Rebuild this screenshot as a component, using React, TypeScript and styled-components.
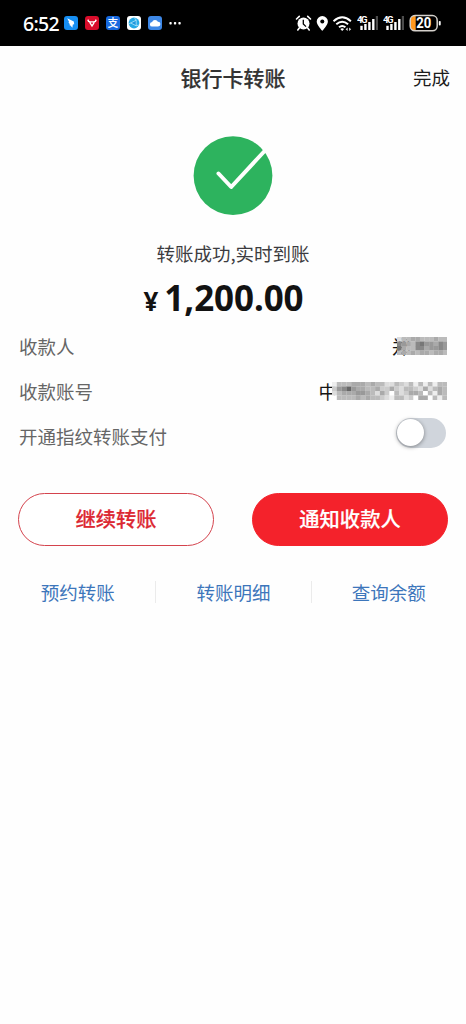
import React from 'react';
import styled, { createGlobalStyle } from 'styled-components';

const GlobalStyle = createGlobalStyle`
  * { box-sizing: border-box; }
  body {
    margin: 0;
    background: #fefefe;
    font-family: "Noto Sans CJK SC", sans-serif;
  }
  button { font-family: inherit; border: 0; background: none; padding: 0; margin: 0; }
`;

const Screen = styled.div`
  width: 466px;
  height: 1024px;
  background: #fefefe;
  overflow: hidden;
`;

const StatusBar = styled.div`
  height: 46px;
  background: #000;
  display: flex;
  justify-content: space-between;
  padding: 0 25px 0 23px;
  color: #fff;
`;

const StatusLeft = styled.div`
  display: flex;
  align-items: center;
  height: 46px;
`;

const Clock = styled.span`
  font: 500 19.5px/24px "Noto Sans", sans-serif;
  width: 41px;
  padding-top: 2px;
  letter-spacing: -0.7px;
  white-space: nowrap;
`;

const AppIcons = styled.div`
  display: flex;
  gap: 7px;
  svg { overflow: visible; }
`;

const StatusRight = styled.div`
  display: flex;
  align-items: center;
  height: 46px;
`;

const Header = styled.header`
  display: grid;
  grid-template-columns: 1fr auto 1fr;
  align-items: center;
  height: 64px;
  padding: 0 16px 2px;
`;

const Title = styled.h1`
  grid-column: 2;
  margin: 0;
  font-size: 21px;
  line-height: 30px;
  font-weight: 500;
  color: #333;
  -webkit-text-stroke: 0.2px #333;
`;

const DoneButton = styled.button`
  justify-self: end;
  font-size: 18.5px;
  line-height: 28px;
  color: #1c1c1c;
`;

const Result = styled.section`
  display: flex;
  flex-direction: column;
  align-items: center;
  padding-top: 26px;
`;

const ResultText = styled.p`
  margin: 23px 0 0;
  font-size: 18.5px;
  line-height: 28px;
  color: #3c3c40;
`;

const Amount = styled.div`
  display: flex;
  align-items: baseline;
  margin: 7px 19px 0 0;
  height: 48px;
  font-family: "Noto Sans", sans-serif;
  font-weight: 700;
  color: #121212;
  line-height: 48px;
`;

const Currency = styled.span`
  font-size: 26px;
  margin-right: 6px;
`;

const Figure = styled.span`
  font-size: 35px;
  letter-spacing: -0.1px;
`;

const Details = styled.dl`
  margin: 2px 0 0;
  padding: 0 19px;
`;

const DetailRow = styled.div`
  display: flex;
  justify-content: space-between;
  align-items: center;
  height: 44.7px;
`;

const DetailLabel = styled.dt`
  font-size: 18.5px;
  line-height: 28px;
  color: #666;
`;

const DetailValue = styled.dd`
  display: flex;
  align-items: center;
  margin: 0;
  font-size: 18.5px;
  line-height: 28px;
  color: #161616;
`;

const Mosaic = styled.svg<{ $overlap: number }>`
  display: block;
  position: relative;
  margin-left: -${p => p.$overlap}px;
  filter: blur(0.4px);
`;

const Toggle = styled.button`
  display: flex;
  align-items: center;
  width: 50px;
  height: 30px;
  margin: -6px 1px 0 0;
  padding-left: 1px;
  border-radius: 15px;
  background: #d0d5dc;
`;

const Knob = styled.span`
  width: 27px;
  height: 27px;
  border-radius: 50%;
  background: #fff;
  box-shadow: 0 1px 4px rgba(0, 0, 0, 0.4);
`;

const Actions = styled.div`
  display: flex;
  justify-content: space-between;
  padding: 0 18px;
  margin-top: 35px;
`;

const ActionButton = styled.button<{ $primary?: boolean }>`
  width: 196px;
  height: 53px;
  padding-bottom: 3px;
  border-radius: 27px;
  border: 1.3px solid ${p => (p.$primary ? '#f4222b' : '#d4434d')};
  background: ${p => (p.$primary ? '#f4222b' : '#fff')};
  color: ${p => (p.$primary ? '#fff' : '#dc2832')};
  font-size: 20.3px;
  font-weight: 500;
  -webkit-text-stroke: 0.2px currentColor;
`;

const Links = styled.nav`
  display: grid;
  grid-template-columns: repeat(3, 1fr);
  align-items: center;
  margin-top: 35px;
`;

const LinkItem = styled.a`
  height: 22px;
  text-align: center;
  font-size: 18.5px;
  line-height: 22px;
  color: #3d76bb;
  & + & { border-left: 1px solid #ebebeb; }
`;

const PAYEE_CELLS = ['dbbaabbbabb', '89ab8799a89', '7abb88a9989', 'bababaabaab'];
const ACCOUNT_CELLS = [
  'ebbbaaababbddbcdbebebebb',
  'c9869aabbaccacdbbcdadbab',
  'dbaaa99abdacfbdcaabfbeab',
  'fbbbbababbcdebbdcfaafbeb',
];

/* Pixelated block that hides private data; each hex digit is one grey cell. */
const MaskedBlock = ({ rows, width, overlap }: { rows: string[]; width: number; overlap: number }) => {
  const cols = rows[0].length;
  return (
    <Mosaic $overlap={overlap} width={width} height={18} viewBox={`0 0 ${cols} 4`} preserveAspectRatio="none">
      {rows.map((row, y) =>
        row.split('').map((v, x) => (
          <rect key={`${x}-${y}`} x={x} y={y} width={1.03} height={1.03} fill={`#${v}${v}${v}`} />
        )),
      )}
    </Mosaic>
  );
};

const Signal = () => (
  <svg width="22" height="20" viewBox="0 0 22 20">
    <text x="0" y="9.8" fontFamily="Roboto" fontSize="9.6" fontWeight="700" fill="#fff" textLength="10.5">4G</text>
    <g fill="#fff">
      <rect x="3.3" y="12.8" width="2.4" height="4.2" />
      <rect x="7.2" y="11" width="2.4" height="6" />
      <rect x="11.2" y="9" width="2.4" height="8" />
      <rect x="15.1" y="6" width="2.4" height="11" />
      <rect x="18.8" y="3" width="2.2" height="14" fill="#4c4c4c" />
    </g>
  </svg>
);

const App = () => (
  <>
    <GlobalStyle />
    <Screen>
      <StatusBar>
        <StatusLeft>
          <Clock>6:52</Clock>
          <AppIcons>
            <svg width="14" height="14" viewBox="0 0 14 14">
              <rect width="14" height="14" rx="3" fill="#168ef2" />
              <path d="M3.2 2.2 9.8 5.6 10.2 8.2 8.8 8.6 8.4 11.8 6.4 9.6 5.2 9 6 8.2 4.4 6.6 5.1 6z" fill="#fff" />
            </svg>
            <svg width="14" height="14" viewBox="0 0 14 14">
              <rect width="14" height="14" rx="3" fill="#d90d2b" />
              <path d="M2.8 3.6 3.6 5.4 5.2 5.9H8.8L10.4 5.4 11.2 3.6M4.6 6.2 7 10 9.4 6.2" fill="none" stroke="#fff" strokeWidth="1.4" />
            </svg>
            <svg width="14" height="14" viewBox="0 0 14 14">
              <rect width="14" height="14" rx="3" fill="#1769df" />
              <text x="7" y="11" textAnchor="middle" fontFamily="Noto Sans CJK SC" fontWeight="500" fontSize="10.8" fill="#fff">支</text>
            </svg>
            <svg width="14" height="14" viewBox="0 0 14 14">
              <rect width="14" height="14" rx="3" fill="#fff" />
              <circle cx="7" cy="7" r="5.4" fill="#25a9e6" />
              <path d="M3.7 7 9.2 4.2V9.8z" fill="#2196dc" stroke="#c9effc" strokeWidth=".7" />
              <path d="M9.2 4.2 7.4 1.7M3.7 7l-2 1M9.2 9.8l2.5-.8" stroke="#c9effc" strokeWidth=".7" />
            </svg>
            <svg width="14" height="14" viewBox="0 0 14 14">
              <rect width="14" height="14" rx="3" fill="#3d87e6" />
              <path d="M4.3 10.6a2.3 2.3 0 0 1-.2-4.6 3.1 3.1 0 0 1 5.8-.2 2.4 2.4 0 0 1 .2 4.8z" fill="#fff" />
            </svg>
            <svg width="14" height="14" viewBox="0 0 14 14">
              <g fill="#fff">
                <rect x=".4" y="6.1" width="2.3" height="2.3" rx=".7" />
                <rect x="4.9" y="6.1" width="2.3" height="2.3" rx=".7" />
                <rect x="9.4" y="6.1" width="2.3" height="2.3" rx=".7" />
              </g>
            </svg>
          </AppIcons>
        </StatusLeft>
        <StatusRight>
          <svg width="60" height="18" viewBox="0 0 60 18">
            <circle cx="8.5" cy="9.5" r="6" fill="#fff" />
            <path d="M8.3 5.8V10L11 12.6" fill="none" stroke="#000" strokeWidth="1.3" />
            <path d="M1.5 5 4.3 2.3M15.5 5 12.7 2.3M4.3 14 2.8 16M12.7 14l1.5 2" stroke="#fff" strokeWidth="1.6" strokeLinecap="round" />
            <path d="M27.3 2a5.6 5.6 0 0 0-5.6 5.6c0 3.8 5.6 9.3 5.6 9.3s5.6-5.5 5.6-9.3a5.6 5.6 0 0 0-5.6-5.6z" fill="#fff" />
            <circle cx="27.3" cy="7.5" r="2" fill="#000" />
            <path d="M38.5 7.2Q47.2 -.5 55.9 7.2M41.3 10.3Q47.2 5.1 53.1 10.3M44 13.3Q47.2 10.5 50.4 13.3" fill="none" stroke="#fff" strokeWidth="1.9" />
            <path d="M45.3 14.9Q47.2 13.5 49.1 14.9L47.2 17z" fill="#fff" />
            <path d="M50.6 15.3 52.7 13.6V17zM56.2 15.3 54.1 13.6V17z" fill="#ddd" />
          </svg>
          <svg width="2" height="2" />
          <Signal />
          <svg width="4" height="2" />
          <Signal />
          <svg width="4" height="2" />
          <svg width="32" height="18" viewBox="0 0 32 18">
            <rect x="1.2" y="1.6" width="27" height="15.2" rx="4.8" fill="#000" />
            <path d="M6.7 1.6V16.8H6A4.8 4.8 0 0 1 1.2 12V6.4A4.8 4.8 0 0 1 6 1.6z" fill="#ff981d" />
            <rect x="1.2" y="1.6" width="27" height="15.2" rx="4.8" fill="none" stroke="#d5d1cc" strokeWidth="1.5" />
            <rect x="29.8" y="6.9" width="1.9" height="4.6" rx=".9" fill="#fff" />
            <text x="7.3" y="14.2" fontFamily="Roboto" fontSize="13.8" fontWeight="700" fill="#fff" textLength="15" lengthAdjust="spacingAndGlyphs">20</text>
          </svg>
        </StatusRight>
      </StatusBar>

      <Header>
        <Title>银行卡转账</Title>
        <DoneButton>完成</DoneButton>
      </Header>

      <Result>
        <svg width="80" height="80" viewBox="0 0 80 80">
          <circle cx="40" cy="39.7" r="39.4" fill="#2db35e" />
          <path d="M25.5 37.5 38.2 51 73 13.5" fill="none" stroke="#fefefe" strokeWidth="4" strokeLinecap="round" strokeLinejoin="round" />
        </svg>
        <ResultText>转账成功,实时到账</ResultText>
        <Amount>
          <Currency>¥</Currency>
          <Figure>1,200.00</Figure>
        </Amount>
      </Result>

      <Details>
        <DetailRow>
          <DetailLabel>收款人</DetailLabel>
          <DetailValue>
            郑
            <MaskedBlock rows={PAYEE_CELLS} width={50.5} overlap={14} />
          </DetailValue>
        </DetailRow>
        <DetailRow>
          <DetailLabel>收款账号</DetailLabel>
          <DetailValue>
            中
            <MaskedBlock rows={ACCOUNT_CELLS} width={115} overlap={5} />
          </DetailValue>
        </DetailRow>
        <DetailRow>
          <DetailLabel>开通指纹转账支付</DetailLabel>
          <Toggle role="switch" aria-checked="false">
            <Knob />
          </Toggle>
        </DetailRow>
      </Details>

      <Actions>
        <ActionButton>继续转账</ActionButton>
        <ActionButton $primary>通知收款人</ActionButton>
      </Actions>

      <Links>
        <LinkItem>预约转账</LinkItem>
        <LinkItem>转账明细</LinkItem>
        <LinkItem>查询余额</LinkItem>
      </Links>
    </Screen>
  </>
);

export default App;
